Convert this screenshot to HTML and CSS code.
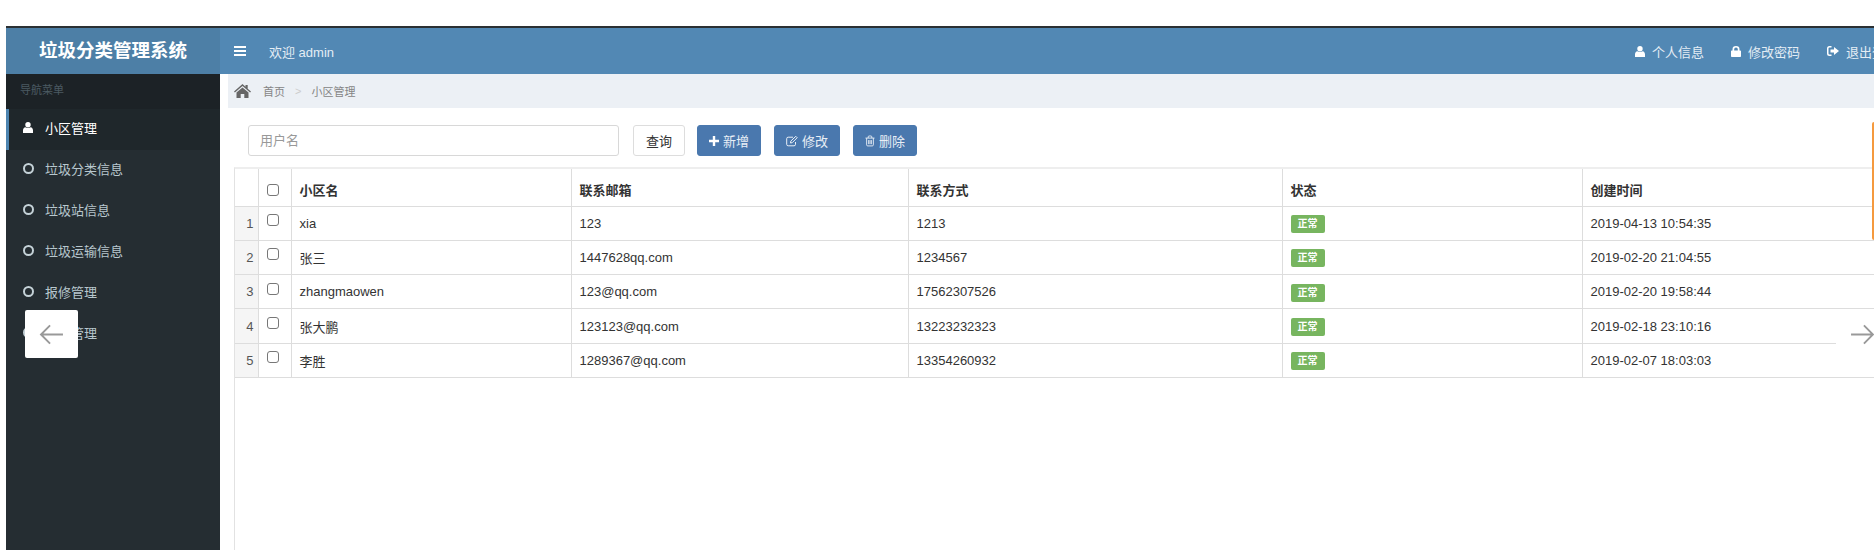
FILE: index.html
```html
<!DOCTYPE html>
<html lang="zh-CN">
<head>
    <meta charset="UTF-8">
    <title>垃圾分类管理系统</title>
    <link rel="stylesheet" href="styles.css">
</head>
<body>
    <div class="app">
        <header class="topbar">
            <div class="logo">垃圾分类管理系统</div>
            <div class="navbar">
                <svg class="bars" viewBox="0 0 12 10"><path d="M0 0h12v2H0zM0 4h12v2H0zM0 8h12v2H0z"/></svg>
                <span class="welcome">欢迎 admin</span>
                <nav class="user-menu">
                    <a>
                        <svg class="nav-icon" viewBox="0 0 10 11"><circle cx="5" cy="2.8" r="2.7"/><path d="M0 11V8.2C0 6.6 1 5.4 2.4 5.2 3.8 6.3 6.2 6.3 7.6 5.2 9 5.4 10 6.6 10 8.2V11z"/></svg>
                        个人信息
                    </a>
                    <a>
                        <svg class="nav-icon" viewBox="0 0 10 11"><path fill-rule="evenodd" d="M1.5 4.5V3.300a3.500 3.300 0 0 1 7 0v1.200h.7a.8.8 0 0 1 .8.8v4.900a.8.8 0 0 1-.8.8H.8a.8.8 0 0 1-.8-.8V5.300a.8.8 0 0 1 .8-.8zM3.200 4.500h3.600V3.300a1.800 1.700 0 0 0-3.600 0z"/></svg>
                        修改密码
                    </a>
                    <a>
                        <svg class="nav-icon wide" viewBox="0 0 12 10"><path d="M4.500 0H2.500A2.500 2.500 0 0 0 0 2.500v5A2.500 2.500 0 0 0 2.500 10h2V8.500h-2a1 1 0 0 1-1-1v-5a1 1 0 0 1 1-1h2zM7 1l5 4-5 4V6.500H3.500v-3H7z"/></svg>
                        退出登录
                    </a>
                </nav>
            </div>
        </header>

        <div class="main">
            <aside class="sidebar">
                <div class="menu-title">导航菜单</div>
                <ul class="menu">
                    <li class="active">
                        <svg class="menu-icon" viewBox="0 0 10 11"><circle cx="5" cy="2.8" r="2.7"/><path d="M0 11V8.2C0 6.6 1 5.4 2.4 5.2 3.800 6.300 6.200 6.300 7.600 5.200 9 5.400 10 6.600 10 8.200V11z"/></svg>
                        小区管理
                    </li>
                    <li><span class="ring"></span>垃圾分类信息</li>
                    <li><span class="ring"></span>垃圾站信息</li>
                    <li><span class="ring"></span>垃圾运输信息</li>
                    <li><span class="ring"></span>报修管理</li>
                    <li><span class="ring"></span>用户管理</li>
                </ul>
            </aside>

            <section class="content">
                <div class="breadcrumb">
                    <svg class="home" viewBox="0 0 17 14"><path d="M8.500 0 11.500 2.700V1h2.200v3.700L17 7.600l-.9 1L8.500 2 .9 8.600 0 7.600zM8.500 3.400 14.500 8.600V14h-4.200v-4H6.700v4H2.500V8.600z"/></svg>
                    <span>首页</span>
                    <span class="sep">&gt;</span>
                    <span>小区管理</span>
                </div>

                <div class="toolbar">
                    <input class="search" type="text" placeholder="用户名">
                    <button class="btn btn-query">查询</button>
                    <button class="btn btn-primary">
                        <svg class="btn-icon" viewBox="0 0 10 10"><path d="M3.800 0h2.400v3.800H10v2.400H6.200V10H3.800V6.200H0V3.800h3.800z"/></svg>
                        新增
                    </button>
                    <button class="btn btn-primary">
                        <svg class="btn-icon outline" viewBox="0 0 12 11"><path d="M9.500 6.500v2.300a1.500 1.500 0 0 1-1.500 1.500H2.200A1.500 1.500 0 0 1 .7 8.800V3.200a1.500 1.500 0 0 1 1.500-1.500H7"/><path d="M4.800 5.600 9.800.8l1.400 1.400-4.900 4.900-1.800.4z"/></svg>
                        修改
                    </button>
                    <button class="btn btn-primary">
                        <svg class="btn-icon outline trash" viewBox="0 0 11 12"><path d="M.5 2.800h10M3.500 2.800V1.500a1 1 0 0 1 1-1h2a1 1 0 0 1 1 1v1.300M1.800 2.800v7.400a1.200 1.200 0 0 0 1.200 1.200h5a1.200 1.200 0 0 0 1.200-1.200V2.800M4 5v4.500M5.500 5v4.500M7 5v4.500"/></svg>
                        删除
                    </button>
                </div>

                <div class="table-wrap">
                    <table class="grid">
                        <colgroup>
                            <col class="col-num">
                            <col class="col-check">
                            <col class="col-name">
                            <col class="col-mail">
                            <col class="col-phone">
                            <col class="col-state">
                            <col class="col-time">
                        </colgroup>
                        <thead>
                            <tr>
                                <th></th>
                                <th><input class="check" type="checkbox"></th>
                                <th>小区名</th>
                                <th>联系邮箱</th>
                                <th>联系方式</th>
                                <th>状态</th>
                                <th>创建时间</th>
                            </tr>
                        </thead>
                        <tbody>
                            <tr>
                                <td class="num">1</td>
                                <td><input class="check" type="checkbox"></td>
                                <td>xia</td>
                                <td>123</td>
                                <td>1213</td>
                                <td><span class="badge">正常</span></td>
                                <td>2019-04-13 10:54:35</td>
                            </tr>
                            <tr>
                                <td class="num">2</td>
                                <td><input class="check" type="checkbox"></td>
                                <td>张三</td>
                                <td>1447628qq.com</td>
                                <td>1234567</td>
                                <td><span class="badge">正常</span></td>
                                <td>2019-02-20 21:04:55</td>
                            </tr>
                            <tr>
                                <td class="num">3</td>
                                <td><input class="check" type="checkbox"></td>
                                <td>zhangmaowen</td>
                                <td>123@qq.com</td>
                                <td>17562307526</td>
                                <td><span class="badge">正常</span></td>
                                <td>2019-02-20 19:58:44</td>
                            </tr>
                            <tr>
                                <td class="num">4</td>
                                <td><input class="check" type="checkbox"></td>
                                <td>张大鹏</td>
                                <td>123123@qq.com</td>
                                <td>13223232323</td>
                                <td><span class="badge">正常</span></td>
                                <td>2019-02-18 23:10:16</td>
                            </tr>
                            <tr>
                                <td class="num">5</td>
                                <td><input class="check" type="checkbox"></td>
                                <td>李胜</td>
                                <td>1289367@qq.com</td>
                                <td>13354260932</td>
                                <td><span class="badge">正常</span></td>
                                <td>2019-02-07 18:03:03</td>
                            </tr>
                        </tbody>
                    </table>
                </div>
            </section>
        </div>
    </div>

    <div class="slide-arrow slide-prev">
        <svg viewBox="0 0 26 22"><path d="M25 11H2M11.500 1.500 2 11l9.500 9.500"/></svg>
    </div>
    <div class="slide-arrow slide-next">
        <svg viewBox="0 0 26 22"><path d="M1 11h23M14.500 1.500 24 11l-9.500 9.500"/></svg>
    </div>
    <div class="side-tab"></div>
</body>
</html>
```

FILE: styles.css
```css
html, body {
    margin: 0;
    height: 550px;
    overflow: hidden;
    background: #fff;
}
body {
    font-family: "Liberation Sans", "Noto Sans CJK SC", sans-serif;
    font-size: 13px;
    color: #333;
    position: relative;
}
.app {
    margin: 26px 0 0 6px;
    border-top: 2px solid #2b3033;
    height: 522px;
    display: flex;
    flex-direction: column;
}

/* header */
.topbar {
    display: flex;
    height: 46px;
    flex-shrink: 0;
}
.logo {
    width: 214px;
    flex-shrink: 0;
    background: #4d7fa6;
    color: #fff;
    font-size: 18.500px;
    font-weight: bold;
    text-align: center;
    line-height: 46px;
}
.navbar {
    flex: 1;
    min-width: 0;
    background: #5288b4;
    color: #fff;
    display: flex;
    align-items: center;
    padding-left: 14px;
    overflow: hidden;
}
.bars {
    width: 12px;
    height: 10px;
    fill: #fff;
    flex-shrink: 0;
}
.welcome {
    margin-left: 23px;
    color: #e4edf4;
}
.user-menu {
    margin-left: auto;
    display: flex;
    gap: 27px;
    color: #e4edf4;
    margin-right: -24px;
    flex-shrink: 0;
}
.user-menu a {
    display: flex;
    align-items: center;
    gap: 7px;
    white-space: nowrap;
}
.nav-icon {
    width: 10px;
    height: 11px;
    fill: #fff;
}
.nav-icon.wide {
    width: 12px;
    height: 10px;
}

/* sidebar */
.main {
    flex: 1;
    display: flex;
    min-height: 0;
}
.sidebar {
    width: 214px;
    flex-shrink: 0;
    background: #252d32;
}
.menu-title {
    height: 35px;
    line-height: 32px;
    padding-left: 14px;
    font-size: 11px;
    color: #4b5a62;
    background: #1c2226;
}
.menu {
    list-style: none;
    margin: 0;
    padding: 0;
}
.menu li {
    height: 41px;
    box-sizing: border-box;
    padding: 0 0 4px 17px;
    display: flex;
    align-items: center;
    color: #b8c7ce;
}
.menu li.active {
    color: #fff;
    background: #1f272b;
    box-shadow: inset 3px 0 0 #4d84b0;
}
.menu-icon {
    width: 10px;
    height: 11px;
    fill: #fff;
    margin-right: 12px;
}
.ring {
    width: 11px;
    height: 11px;
    box-sizing: border-box;
    border: 2px solid #c5d2d8;
    border-radius: 50%;
    margin-right: 11px;
}

/* content */
.content {
    flex: 1;
    min-width: 0;
    display: flex;
    flex-direction: column;
}
.breadcrumb {
    margin-left: 8px;
    height: 34px;
    flex-shrink: 0;
    background: #ecf0f5;
    display: flex;
    align-items: center;
    padding-left: 6px;
    font-size: 11px;
    color: #858585;
}
.home {
    width: 17px;
    height: 14px;
    fill: #666;
    margin-right: 12px;
}
.sep {
    margin: 0 10px;
    color: #ccc;
}
.toolbar {
    display: flex;
    align-items: flex-start;
    height: 59px;
    flex-shrink: 0;
    padding: 17px 0 0 28px;
    box-sizing: border-box;
}
.search {
    width: 371px;
    height: 31px;
    box-sizing: border-box;
    border: 1px solid #d8d8d8;
    border-radius: 3px;
    padding: 0 11px;
    font: inherit;
    margin-right: 14px;
}
.search::placeholder {
    color: #999;
}
.btn {
    height: 31px;
    box-sizing: border-box;
    border: 1px solid #ddd;
    border-radius: 3px;
    background: #fff;
    color: #333;
    font: inherit;
    padding: 0 12px;
    margin-right: 13px;
    display: flex;
    align-items: center;
    gap: 4px;
}
.btn-query {
    margin-right: 12px;
}
.btn-primary {
    background: #4a78ae;
    border-color: #4a78ae;
    color: #e9eff6;
    padding: 0 11px;
}
.btn-icon {
    width: 10px;
    height: 10px;
    fill: #fff;
}
.btn-icon.outline {
    width: 12px;
    height: 12px;
    fill: none;
    stroke: #e9eff6;
    stroke-width: 1;
}
.btn-icon.trash {
    width: 10px;
}
.table-wrap {
    flex: 1;
    margin-left: 14px;
    border-left: 1px solid #e2e2e2;
    border-top: 2px solid #eee;
    overflow: hidden;
}
.grid {
    border-collapse: collapse;
    table-layout: fixed;
    width: 1639px;
}
.col-num { width: 23px; }
.col-check { width: 33px; }
.col-name { width: 280px; }
.col-mail { width: 337px; }
.col-phone { width: 374px; }
.col-state { width: 300px; }
.col-time { width: 292px; }
.grid th, .grid td {
    border-right: 1px solid #ddd;
    border-bottom: 1px solid #ddd;
    padding: 0 8px;
    text-align: left;
}
.grid th {
    height: 37px;
    padding-top: 5px;
    box-sizing: border-box;
    font-weight: bold;
}
.grid td {
    height: 34.330px;
    box-sizing: border-box;
}
.grid .num {
    background: #f5f5f5;
    text-align: right;
    padding: 0 4px 0 0;
    color: #555;
}
.check {
    appearance: none;
    display: block;
    width: 12px;
    height: 12px;
    margin: 0;
    border: 1px solid #777;
    border-radius: 3px;
    background: #fff;
}
.grid td .check {
    margin-top: -6px;
}
.badge {
    display: inline-block;
    background: #77b55f;
    color: #fff;
    font-size: 10px;
    font-weight: bold;
    line-height: 18px;
    padding: 0 7px;
    margin-top: 2px;
    border-radius: 2px;
    vertical-align: middle;
}

/* carousel arrows and page tab lying over the page */
.slide-arrow {
    position: absolute;
    top: 310px;
    height: 48px;
    width: 53px;
    background: #fff;
    display: flex;
    align-items: center;
    justify-content: center;
}
.slide-prev {
    left: 25px;
    border-radius: 2px;
}
.slide-next {
    left: 1836px;
    justify-content: flex-start;
    padding-left: 14px;
    box-sizing: border-box;
}
.slide-arrow svg {
    width: 25px;
    height: 21px;
    flex-shrink: 0;
    fill: none;
    stroke: #999;
    stroke-width: 2;
}
.side-tab {
    position: absolute;
    right: 0;
    top: 122px;
    width: 2px;
    height: 118px;
    background: #f59a3f;
    border-radius: 2px 0 0 2px;
}
```
